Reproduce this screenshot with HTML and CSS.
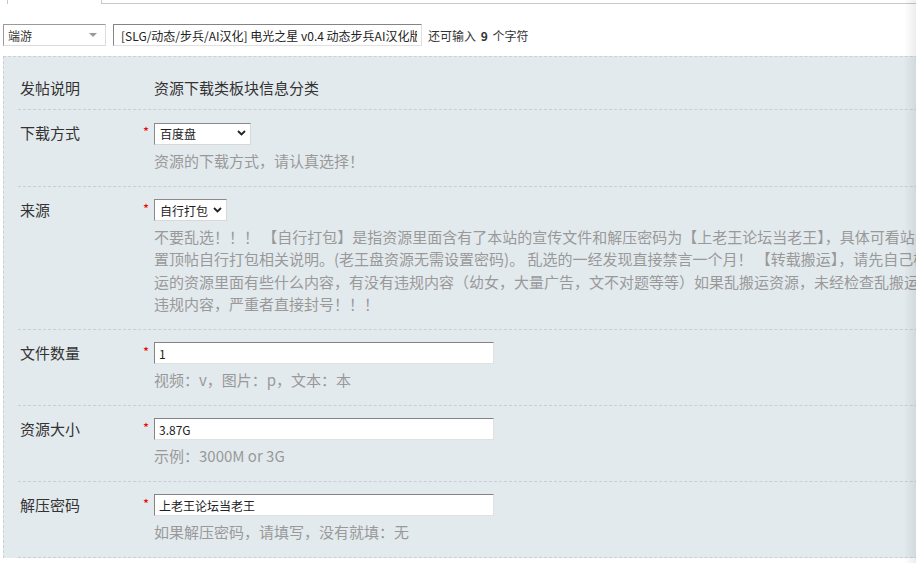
FILE: index.html
```html
<!DOCTYPE html>
<html lang="zh-CN">
<head>
    <meta charset="UTF-8">
    <title>发表帖子</title>
    <link rel="stylesheet" href="styles.css">
</head>
<body>
<div class="tabs">
    <div class="tab"></div>
</div>

<div class="subject-bar">
    <div class="ftid">
        <span>端游</span>
        <i class="ftid-arrow"></i>
    </div>
    <input class="px subject" type="text" value="[SLG/动态/步兵/AI汉化] 电光之星 v0.4 动态步兵AI汉化版 [PC+安卓/3.87G]">
    <span class="counter">还可输入 <strong>9</strong> 个字符</span>
</div>

<div class="sort-box">
    <div class="field field-first">
        <div class="label">发帖说明</div>
        <div class="value">资源下载类板块信息分类</div>
    </div>

    <div class="field">
        <div class="label">下载方式</div>
        <span class="rq">*</span>
        <div class="value">
            <span class="sel-wrap">
                <select class="ps sel-wide">
                    <option>百度盘</option>
                </select>
                <svg class="chev" width="9" height="6" viewBox="0 0 9 6"><path d="M1 1l3.5 3.5L8 1" fill="none" stroke="#222" stroke-width="1.8"/></svg>
            </span>
            <div class="hint">资源的下载方式，请认真选择！</div>
        </div>
    </div>

    <div class="field">
        <div class="label">来源</div>
        <span class="rq">*</span>
        <div class="value">
            <span class="sel-wrap">
                <select class="ps sel-narrow">
                    <option>自行打包</option>
                </select>
                <svg class="chev" width="9" height="6" viewBox="0 0 9 6"><path d="M1 1l3.5 3.5L8 1" fill="none" stroke="#222" stroke-width="1.8"/></svg>
            </span>
            <div class="hint hint-long">
                <div>不要乱选！！！ 【自行打包】是指资源里面含有了本站的宣传文件和解压密码为【上老王论坛当老王】，具体可看站内</div>
                <div>置顶帖自行打包相关说明。(老王盘资源无需设置密码)。 乱选的一经发现直接禁言一个月！ 【转载搬运】，请先自己检查一遍搬</div>
                <div>运的资源里面有些什么内容，有没有违规内容（幼女，大量广告，文不对题等等）如果乱搬运资源，未经检查乱搬运含有</div>
                <div>违规内容，严重者直接封号！！！</div>
            </div>
        </div>
    </div>

    <div class="field">
        <div class="label">文件数量</div>
        <span class="rq">*</span>
        <div class="value">
            <input class="px" type="text" value="1">
            <div class="hint">视频：v，图片：p，文本：本</div>
        </div>
    </div>

    <div class="field">
        <div class="label">资源大小</div>
        <span class="rq">*</span>
        <div class="value">
            <input class="px" type="text" value="3.87G">
            <div class="hint">示例：3000M or 3G</div>
        </div>
    </div>

    <div class="field">
        <div class="label">解压密码</div>
        <span class="rq">*</span>
        <div class="value">
            <input class="px" type="text" value="上老王论坛当老王">
            <div class="hint">如果解压密码，请填写，没有就填：无</div>
        </div>
    </div>
</div>

<div class="edge-shade"></div>
</body>
</html>
```

FILE: styles.css
```css
html, body {
    margin: 0;
    padding: 0;
    overflow: hidden;
}

body {
    width: 916px;
    height: 563px;
    background: #fff;
    color: #333;
    font-family: "Noto Sans CJK SC", "Noto Sans", sans-serif;
    font-size: 12px;
}

/* tab strip, mostly scrolled out of view */
.tabs {
    display: flex;
    height: 3px;
    margin-left: 7px;
    border-bottom: 1px solid #c8c8c8;
}

.tab {
    width: 93px;
    height: 4px;
    margin-bottom: -1px;
    background: #fff;
    border-left: 1px solid #c8c8c8;
    border-right: 1px solid #c8c8c8;
}

.subject-bar {
    display: flex;
    align-items: center;
    gap: 7px;
    margin-top: 20px;
    padding-left: 3px;
}

.ftid {
    display: flex;
    align-items: center;
    justify-content: space-between;
    box-sizing: border-box;
    width: 103px;
    height: 22px;
    padding: 0 8px 0 4px;
    background: #fff;
    border: 1px solid;
    border-color: #9a9a9a #dcdcdc #dcdcdc #9a9a9a;
    font-size: 12px;
    color: #333;
}

.ftid-arrow {
    width: 0;
    height: 0;
    border-left: 4px solid transparent;
    border-right: 4px solid transparent;
    border-top: 4px solid #999;
}

.px {
    box-sizing: border-box;
    height: 22px;
    padding: 0 4px;
    border: 1px solid;
    border-color: #848484 #e0e0e0 #e0e0e0 #848484;
    background: #fff;
    font-family: "Noto Sans CJK SC", "Noto Sans", sans-serif;
    font-size: 12px;
    color: #222;
    outline: none;
}

.subject {
    width: 309px;
    padding-left: 7px;
}

.counter {
    font-size: 12px;
    color: #333;
    margin-left: -1px;
}

.counter strong {
    padding: 0 2px;
}

/* sort box */
.sort-box {
    width: 1040px;
    margin: 10px 0 0 3px;
    padding: 10px 0 0 14px;
    background: #e3eaee;
    border-top: 1px dashed #c9d2d8;
    border-left: 1px dashed #c9d2d8;
    font-size: 15px;
}

.field {
    display: flex;
    align-items: flex-start;
    padding: 12px 0 14px 2px;
    border-bottom: 1px dashed #c6cfd5;
}

.field-first {
    padding: 10px 0 10px 2px;
}

.label {
    width: 123px;
    line-height: 22px;
    color: #333;
}

.field-first .label {
    width: 134px;
}

.rq {
    width: 11px;
    line-height: 20px;
    color: #e00;
    font-size: 13px;
}

.value {
    line-height: 22px;
}

.sel-wrap {
    position: relative;
    display: inline-block;
    vertical-align: top;
}

.ps {
    appearance: none;
    -webkit-appearance: none;
    box-sizing: border-box;
    height: 22px;
    padding: 0 16px 0 5px;
    border: 1px solid;
    border-color: #8a8a8a #d8d8d8 #d8d8d8 #8a8a8a;
    border-radius: 0;
    background: #fff;
    font-family: "Noto Sans CJK SC", "Noto Sans", sans-serif;
    font-size: 12px;
    color: #222;
}

.sel-wide {
    width: 97px;
}

.sel-narrow {
    width: 73px;
}

.chev {
    position: absolute;
    right: 5px;
    top: 8px;
    pointer-events: none;
}

.value .px {
    width: 340px;
    display: block;
}

.hint {
    margin-top: 5px;
    line-height: 22px;
    color: #999;
    white-space: nowrap;
}

.hint-long {
    line-height: 22.3px;
}

.edge-shade {
    position: fixed;
    top: 0;
    right: 0;
    width: 12px;
    height: 100%;
    background: linear-gradient(to right, rgba(0, 0, 0, 0), rgba(0, 0, 0, 0.07));
}
```
